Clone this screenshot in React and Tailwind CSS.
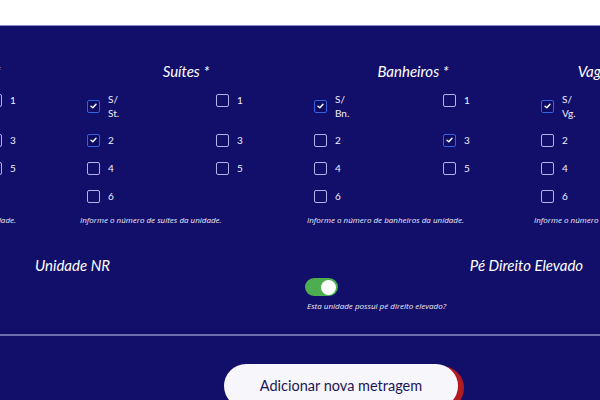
import React from "react";

function Box({ checked }) {
  return checked ? (
    <span className="flex h-[13px] w-[13px] shrink-0 items-center justify-center rounded-[2px] border-[1.5px] border-[#3563e0] bg-[#0f0c66]">
      <svg width="7" height="6" viewBox="0 0 7 6">
        <path d="M1 3.2 L2.8 4.8 L6 1.2" fill="none" stroke="#ffffff" strokeWidth="1.4" strokeLinecap="round" strokeLinejoin="round" />
      </svg>
    </span>
  ) : (
    <span className="h-[13px] w-[13px] shrink-0 rounded-[2px] border-[1.5px] border-[#b3b2e6]" />
  );
}

function Item({ label, checked }) {
  return (
    <div className="flex min-h-[16px] items-center gap-[8px]">
      <Box checked={checked} />
      <span className="text-[10px] leading-[14px] text-[#f0f0fa]">
        {label.map((l, i) => (
          <span key={i} className="block">{l}</span>
        ))}
      </span>
    </div>
  );
}

function Column({ title, abbr, checked, helper }) {
  const items = [
    [["S/", abbr], checked.includes("S")],
    [["1"], checked.includes("1")],
    [["2"], checked.includes("2")],
    [["3"], checked.includes("3")],
    [["4"], checked.includes("4")],
    [["5"], checked.includes("5")],
    [["6"], checked.includes("6")],
  ];
  return (
    <div className="flex flex-col">
      <div className="text-center text-[15px] italic leading-[20px] text-white">{title}</div>
      <div className="mt-[11px] grid grid-cols-[129px_1fr] items-start gap-y-[12px] pl-[7px]">
        {items.map(([l, c], i) => (
          <Item key={i} label={l} checked={c} />
        ))}
      </div>
      <div
        className="mt-[11px] whitespace-nowrap text-[8px] font-medium italic leading-[10px] text-[#ececf8]"
        style={{ fontFamily: "'Open Sans', sans-serif" }}
      >
        {helper}
      </div>
    </div>
  );
}

export default function App() {
  return (
    <div className="h-[400px] w-[600px] overflow-hidden bg-[#120f6b]" style={{ fontFamily: "Lato, 'Open Sans', sans-serif" }}>
      <div className="h-[26px] border-b border-[#8c8ac8] bg-white" />
      <div className="ml-[-147px] w-[893px] pt-[35px]">
        <div className="grid grid-cols-4 gap-x-[15px]">
          <Column title="Dormitórios *" abbr="Dm." checked={["S"]} helper="Informe o número de dormitórios da unidade." />
          <Column title="Suítes *" abbr="St." checked={["S", "2"]} helper="Informe o número de suítes da unidade." />
          <Column title="Banheiros *" abbr="Bn." checked={["S", "3"]} helper="Informe o número de banheiros da unidade." />
          <Column title="Vagas de Garagem *" abbr="Vg." checked={["S"]} helper="Informe o número de vagas da unidade." />
        </div>
        <div className="mt-[30px] grid grid-cols-2 gap-x-[15px]">
          <div>
            <div className="text-center text-[15px] italic leading-[20px] text-white">Unidade NR</div>
          </div>
          <div className="flex flex-col">
            <div className="text-center text-[15px] italic leading-[20px] text-white">Pé Direito Elevado</div>
            <div className="ml-[-2px] mt-[3px] flex h-[18px] w-[33px] items-center justify-end rounded-full bg-[#4cae4f] px-[2px]">
              <span className="h-[15px] w-[15px] rounded-full bg-white" />
            </div>
            <div
              className="mt-[5px] whitespace-nowrap text-[8px] font-medium italic leading-[10px] text-[#ececf8]"
              style={{ fontFamily: "'Open Sans', sans-serif" }}
            >
              Esta unidade possui pé direito elevado?
            </div>
          </div>
        </div>
      </div>
      <div className="mt-[23px] h-[2px] w-full bg-[#6f6db2]" />
      <div className="mt-[28px] flex">
        <button className="ml-[224px] h-[44px] w-[234px] rounded-full bg-[#f7f7fb] text-[14.5px] text-[#1a1658] shadow-[6px_2px_0_#b21b22]">
          Adicionar nova metragem
        </button>
      </div>
    </div>
  );
}
